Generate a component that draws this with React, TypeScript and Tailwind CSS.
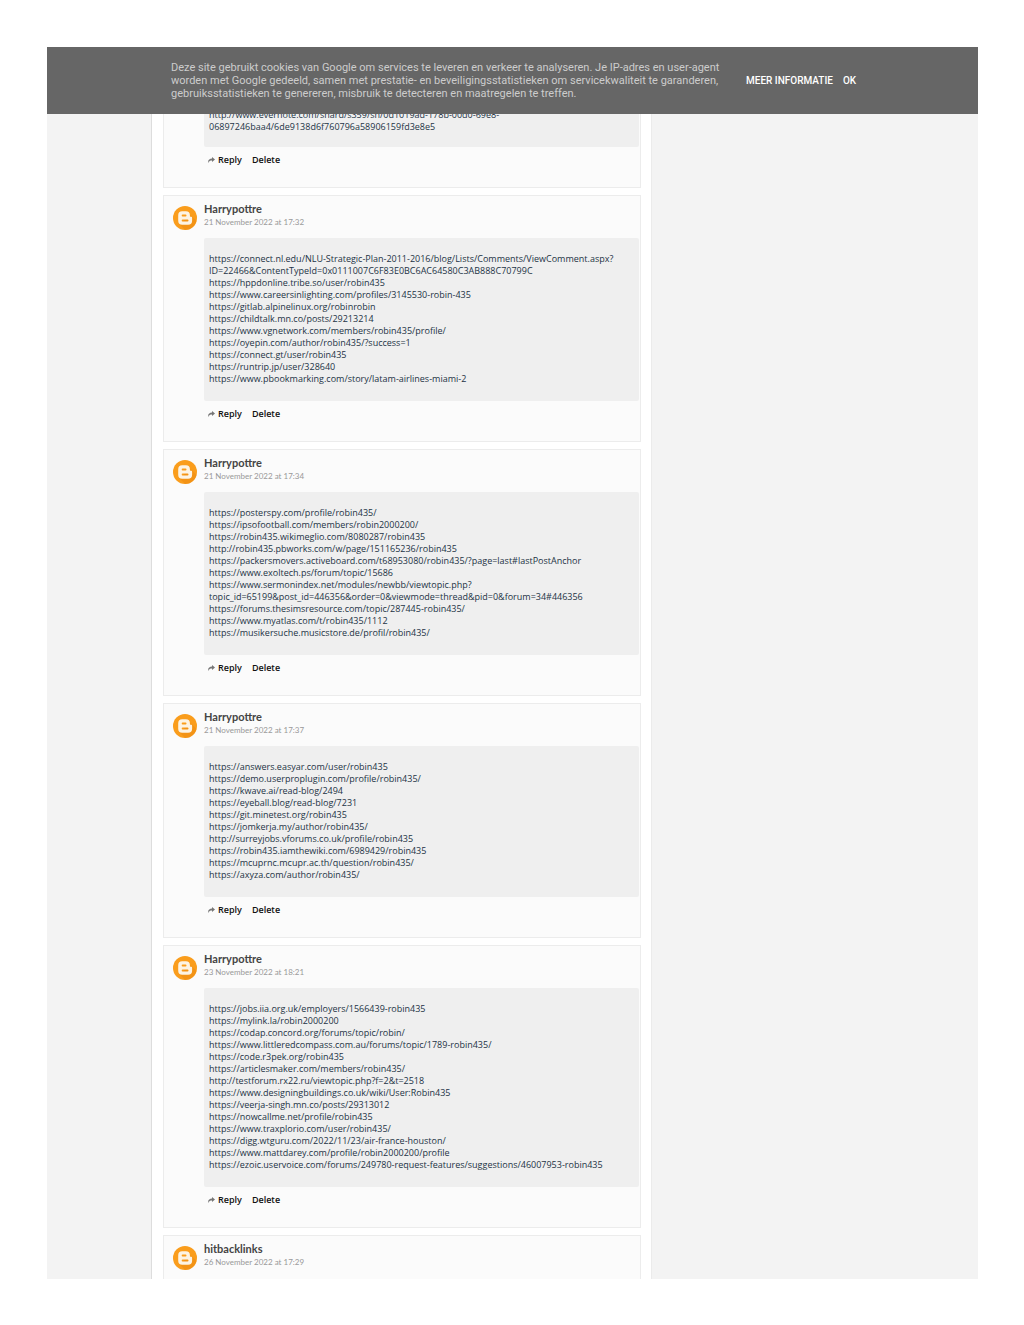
import React from 'react'

interface Comment {
  id: number;
  author: string;
  date: string;
  text: string;
}

const comments: Comment[] = [
  {
    id: 1,
    author: 'Harrypottre',
    date: '21 November 2022 at 17:32',
    text: `https://connect.nl.edu/NLU-Strategic-Plan-2011-2016/blog/Lists/Comments/ViewComment.aspx?
ID=22466&ContentTypeId=0x0111007C6F83E0BC6AC64580C3AB888C70799C
https://hppdonline.tribe.so/user/robin435
https://www.careersinlighting.com/profiles/3145530-robin-435
https://gitlab.alpinelinux.org/robinrobin
https://childtalk.mn.co/posts/29213214
https://www.vgnetwork.com/members/robin435/profile/
https://oyepin.com/author/robin435/?success=1
https://connect.gt/user/robin435
https://runtrip.jp/user/328640
https://www.pbookmarking.com/story/latam-airlines-miami-2`,
  },
  {
    id: 2,
    author: 'Harrypottre',
    date: '21 November 2022 at 17:34',
    text: `https://posterspy.com/profile/robin435/
https://ipsofootball.com/members/robin2000200/
https://robin435.wikimeglio.com/8080287/robin435
http://robin435.pbworks.com/w/page/151165236/robin435
https://packersmovers.activeboard.com/t68953080/robin435/?page=last#lastPostAnchor
https://www.exoltech.ps/forum/topic/15686
https://www.sermonindex.net/modules/newbb/viewtopic.php?
topic_id=65199&post_id=446356&order=0&viewmode=thread&pid=0&forum=34#446356
https://forums.thesimsresource.com/topic/287445-robin435/
https://www.myatlas.com/t/robin435/1112
https://musikersuche.musicstore.de/profil/robin435/`,
  },
  {
    id: 3,
    author: 'Harrypottre',
    date: '21 November 2022 at 17:37',
    text: `https://answers.easyar.com/user/robin435
https://demo.userproplugin.com/profile/robin435/
https://kwave.ai/read-blog/2494
https://eyeball.blog/read-blog/7231
https://git.minetest.org/robin435
https://jomkerja.my/author/robin435/
http://surreyjobs.vforums.co.uk/profile/robin435
https://robin435.iamthewiki.com/6989429/robin435
https://mcuprnc.mcupr.ac.th/question/robin435/
https://axyza.com/author/robin435/`,
  },
  {
    id: 4,
    author: 'Harrypottre',
    date: '23 November 2022 at 18:21',
    text: `https://jobs.iia.org.uk/employers/1566439-robin435
https://mylink.la/robin2000200
https://codap.concord.org/forums/topic/robin/
https://www.littleredcompass.com.au/forums/topic/1789-robin435/
https://code.r3pek.org/robin435
https://articlesmaker.com/members/robin435/
http://testforum.rx22.ru/viewtopic.php?f=2&t=2518
https://www.designingbuildings.co.uk/wiki/User:Robin435
https://veerja-singh.mn.co/posts/29313012
https://nowcallme.net/profile/robin435
https://www.traxplorio.com/user/robin435/
https://digg.wtguru.com/2022/11/23/air-france-houston/
https://www.mattdarey.com/profile/robin2000200/profile
https://ezoic.uservoice.com/forums/249780-request-features/suggestions/46007953-robin435`,
  },
]

const BloggerIcon = () => (
  <svg viewBox="0 0 24 24" className="h-6 w-6 shrink-0" aria-hidden="true">
    <circle cx="12" cy="12" r="12" fill="#fa9d1c" />
    <path d="M6 17.800 L12.200 24 A12 12 0 0 0 23.600 15 L18 9.400Z" fill="#ef8c10" opacity="0.6" />
    <path
      fill="#fdf3e3"
      fillRule="evenodd"
      d="M9.200 5.200h3.700a4 4 0 0 1 4 4v.6c0 .6.4 1 1 1h.2c.6 0 1 .4 1 1v3a4 4 0 0 1-4 4H9.200a4 4 0 0 1-4-4V9.200a4 4 0 0 1 4-4zM9.600 8.600a.9.9 0 0 0 0 1.800h3a.9.9 0 0 0 0-1.800zM9.600 13.600a.9.9 0 0 0 0 1.800h5a.9.9 0 0 0 0-1.800z"
    />
  </svg>
)

const ReplyArrow = () => (
  <svg viewBox="0 0 14 12" className="h-[6px] w-[7px]" aria-hidden="true">
    <path d="M8 0l6 5-6 5V7C4.500 7 2 8 .8 12-.8 6.500 2.500 3.200 8 3z" fill="#777" />
  </svg>
)

const CommentHeader = ({ author, date }: { author: string; date: string }) => (
  <div className="flex gap-[7px] pl-[9px]">
    <div className="pt-[10px]">
      <BloggerIcon />
    </div>
    <div className="pt-[6px]">
      <h3 className="text-[11px] leading-[14px] font-bold text-[#444]">{author}</h3>
      <time className="block text-[8px] leading-[12px] text-[#999]">{date}</time>
    </div>
  </div>
)

const CommentActions = () => (
  <div className="ml-[40px] flex items-center gap-[10px] px-1 pt-[7px] pb-[21px] font-['Open_Sans',sans-serif] text-[9px] leading-[12px] font-semibold text-[#111]">
    <button type="button" className="flex items-center gap-[3px]">
      <ReplyArrow />
      Reply
    </button>
    <button type="button">Delete</button>
  </div>
)

const CommentText = ({ children }: { children: string }) => (
  <p className="mr-px ml-[40px] rounded-xs bg-[#efefef] pt-[15px] pb-4 pl-[5px] font-['Open_Sans',sans-serif] text-[9px] leading-[12px] whitespace-pre-line text-[#1d3345]">
    {children}
  </p>
)

const CookieBanner = () => (
  <header className="relative z-10 flex items-center bg-[#666] py-[14px] pr-[47px] pl-[124px] font-[Roboto,sans-serif]">
    <p className="w-full max-w-[550px] text-[11px] leading-[13px] text-[#ccc]">
      Deze site gebruikt cookies van Google om services te leveren en verkeer te analyseren. Je IP-adres en user-agent
      worden met Google gedeeld, samen met prestatie- en beveiligingsstatistieken om servicekwaliteit te garanderen,
      gebruiksstatistieken te genereren, misbruik te detecteren en maatregelen te treffen.
    </p>
    <nav className="ml-[25px] flex shrink-0 gap-[10px] text-[10px] leading-[13px] font-medium text-white">
      <a href="#info">MEER INFORMATIE</a>
      <a href="#ok">OK</a>
    </nav>
  </header>
)

const App = () => {
  return (
    <div className="bg-white pt-[47px] pr-[46px] pb-[46px] pl-[47px] font-[Lato,sans-serif]">
      <div className="bg-[#f3f3f3]">
        <CookieBanner />
        <main className="-mt-[5px] ml-[104px] flex max-w-[501px] flex-col gap-[7px] border-x border-l-[#ddd] border-r-[#ebebeb] bg-white pr-[10px] pl-[11px]">
          <article className="border border-t-0 border-[#ececec] bg-[#fbfbfb]">
            <p className="mr-px ml-[40px] rounded-xs bg-[#efefef] pb-[14px] pl-[5px] font-['Open_Sans',sans-serif] text-[9px] leading-[12px] whitespace-pre-line text-[#1d3345]">
              {`http://www.evernote.com/shard/s359/sh/0d1019ad-178b-00d0-69e8-
06897246baa4/6de9138d6f760796a58906159fd3e8e5`}
            </p>
            <CommentActions />
          </article>

          {comments.map((comment) => (
            <article key={comment.id} className="border border-[#ececec] bg-[#fbfbfb]">
              <CommentHeader author={comment.author} date={comment.date} />
              <div className="pt-[8px]">
                <CommentText>{comment.text}</CommentText>
              </div>
              <CommentActions />
            </article>
          ))}

          <article className="border border-b-0 border-[#ececec] bg-[#fbfbfb] pb-[9px]">
            <CommentHeader author="hitbacklinks" date="26 November 2022 at 17:29" />
          </article>
        </main>
      </div>
    </div>
  )
}

export default App
